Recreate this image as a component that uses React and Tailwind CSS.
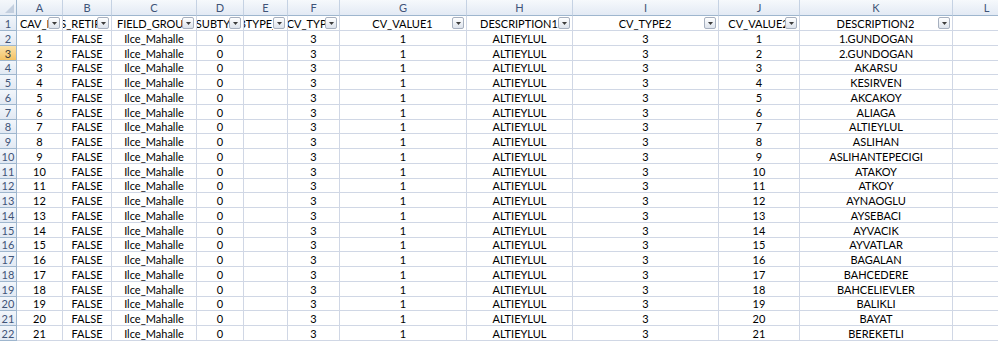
import React from "react";

// sheet font (Calibri-ish)
const font = { fontFamily: "Lato, 'Liberation Sans', sans-serif" };

const cols = ["A", "B", "C", "D", "E", "F", "G", "H", "I", "J", "K", "L"];

const fields = [
  "CAV_ID",
  "IS_RETIRED",
  "FIELD_GROUP",
  "SUBTYPE",
  "SUBTYPE_DESC",
  "CV_TYPE1",
  "CV_VALUE1",
  "DESCRIPTION1",
  "CV_TYPE2",
  "CV_VALUE2",
  "DESCRIPTION2",
];

const names = [
  "1.GUNDOGAN",
  "2.GUNDOGAN",
  "AKARSU",
  "KESIRVEN",
  "AKCAKOY",
  "ALIAGA",
  "ALTIEYLUL",
  "ASLIHAN",
  "ASLIHANTEPECIGI",
  "ATAKOY",
  "ATKOY",
  "AYNAOGLU",
  "AYSEBACI",
  "AYVACIK",
  "AYVATLAR",
  "BAGALAN",
  "BAHCEDERE",
  "BAHCELIEVLER",
  "BALIKLI",
  "BAYAT",
  "BEREKETLI",
];

const rows = names.map((n, i) => [
  String(i + 1),
  "FALSE",
  "Ilce_Mahalle",
  "0",
  "",
  "3",
  "1",
  "ALTIEYLUL",
  "3",
  String(i + 1),
  n,
  "",
]);

function FilterButton() {
  return (
    <span className="absolute right-[2px] top-[1px] w-[12px] h-[12px] border border-[#a7b0bf] rounded-[2px] bg-gradient-to-b from-white to-[#dde3ec] flex items-center justify-center">
      <svg width="5" height="3" viewBox="0 0 5 3">
        <path d="M0 0h5L2.5 3z" fill="#3c3c3c" />
      </svg>
    </span>
  );
}

function RowHead({ n, h }) {
  const active = n === 3;
  return (
    <div
      className={`${h} border-r border-b border-[#9eb6ce] flex items-center justify-center text-[11px] ${
        active
          ? "bg-gradient-to-b from-[#fbe2a8] to-[#f3c264] text-[#3a3a3a]"
          : "bg-gradient-to-b from-[#f2f6fb] to-[#e2e9f3] text-[#3f5478]"
      }`}
    >
      {n}
    </div>
  );
}

// field name cell: text centred on the whole cell, clipped where the filter button starts
function FieldCell({ label }) {
  return (
    <div className="h-[15px] relative overflow-hidden border-r border-b border-[#d0d7e5] text-black">
      <div className="absolute inset-y-0 left-0 right-[14px] overflow-hidden">
        <div className="h-full w-[calc(100%+13px)] flex items-center justify-center whitespace-nowrap">
          {label}
        </div>
      </div>
      <FilterButton />
    </div>
  );
}

export default function App() {
  return (
    <div className="w-[998px] h-[342px] overflow-hidden bg-white" style={font}>
      <div className="grid grid-cols-[17px_46px_49px_85px_47px_44px_52px_127px_106px_146px_81px_153px_68px] text-[11px] leading-none">
        {/* column letters */}
        <div className="h-[16px] border-r border-b border-[#9eb6ce] bg-gradient-to-b from-[#f4f7fb] to-[#e4ebf4] relative">
          <svg className="absolute right-[2px] bottom-[2px]" width="9" height="9" viewBox="0 0 9 9">
            <path d="M9 0V9H0z" fill="#c3cfdf" />
          </svg>
        </div>
        {cols.map((c) => (
          <div
            key={c}
            className="h-[16px] border-r border-b border-r-[#c5d2e3] border-b-[#9eb6ce] bg-gradient-to-b from-[#f6f9fc] to-[#e3eaf4] text-[#3f5478] flex items-center justify-center"
          >
            {c}
          </div>
        ))}

        {/* row 1: field names with filters */}
        <RowHead n={1} h="h-[15px]" />
        {fields.map((f) => (
          <FieldCell key={f} label={f} />
        ))}
        <div className="h-[15px] border-r border-b border-[#d0d7e5]" />

        {/* data */}
        {rows.map((r, i) => {
          const n = i + 2;
          const h = n % 4 === 0 ? "h-[14px]" : "h-[15px]";
          return (
            <React.Fragment key={n}>
              <RowHead n={n} h={h} />
              {r.map((v, j) => (
                <div
                  key={j}
                  className={`${h} overflow-hidden border-r border-b border-[#d0d7e5] flex items-center justify-center whitespace-nowrap text-black`}
                >
                  {v}
                </div>
              ))}
            </React.Fragment>
          );
        })}
      </div>
    </div>
  );
}
